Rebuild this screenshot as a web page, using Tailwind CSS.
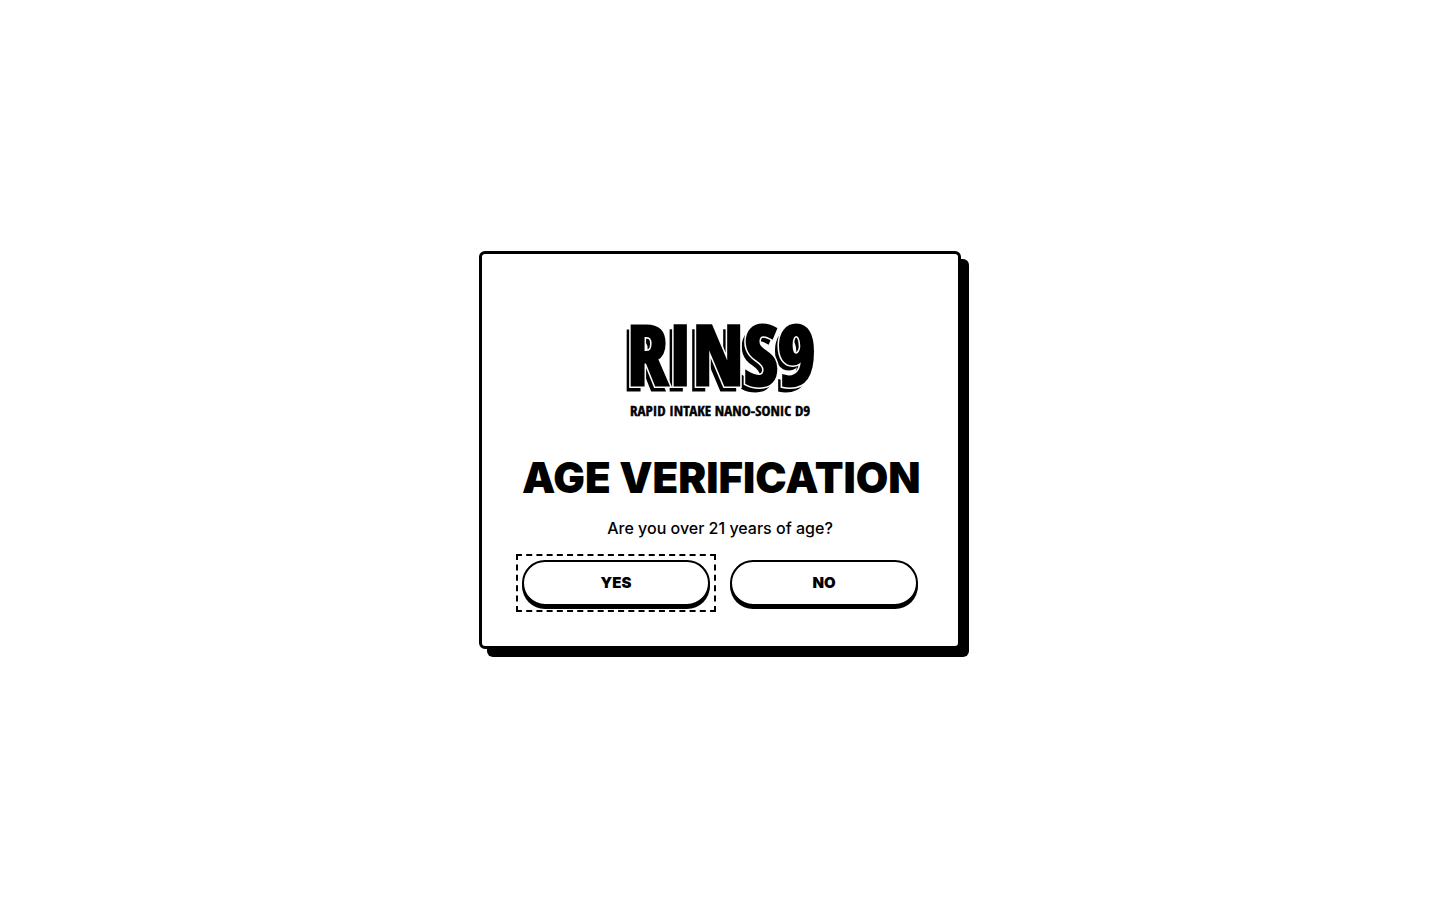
<!DOCTYPE html>
<html lang="en">
  <head>
    <meta charset="UTF-8" />
    <meta name="viewport" content="width=device-width, initial-scale=1.0" />
    <script src="https://cdn.jsdelivr.net/npm/@tailwindcss/browser@4"></script>
    <title>Age Verification</title>
  </head>
  <body class="bg-white text-black font-['Inter',sans-serif]">
    <div class="min-h-screen grid place-items-center p-4">
      <main class="w-full max-w-[482px] rounded-md border-3 border-black bg-white p-10 text-center shadow-[8px_8px_0_#000]">
        <!-- logo: drop letters, white edge, solid letters on top -->
        <svg class="mx-auto mt-4 w-[188px] overflow-visible" viewBox="0 0 188 110" role="img" aria-label="RINS9 Rapid Intake Nano-Sonic D9">
          <g class="font-['Open_Sans_Condensed','Roboto_Condensed',sans-serif] font-bold">
            <g class="text-[82px]">
              <text x="-3" y="80" stroke="#000" stroke-width="3">RINS9</text>
              <text x="1" y="75" stroke="#fff" stroke-width="6">RINS9</text>
              <text x="1" y="75" stroke="#000" stroke-width="3">RINS9</text>
            </g>
            <text class="text-[15px]" x="4" y="106" stroke="#000" stroke-width="0.4">RAPID INTAKE NANO-SONIC D9</text>
          </g>
        </svg>
        <h1 class="mt-8 text-[42px] leading-[52px] font-black whitespace-nowrap">AGE VERIFICATION</h1>
        <p class="mt-3 text-base font-medium">Are you over 21 years of age?</p>
        <div class="mt-5 grid grid-cols-2 gap-5 text-[15px] font-black">
          <div class="flex outline-2 outline-dashed outline-offset-4 outline-black">
            <button type="button" class="h-[46px] w-full rounded-full border-2 border-black bg-white shadow-[0_3px_0_#000]">YES</button>
          </div>
          <button type="button" class="h-[46px] w-full rounded-full border-2 border-black bg-white shadow-[0_3px_0_#000]">NO</button>
        </div>
      </main>
    </div>
  </body>
</html>
